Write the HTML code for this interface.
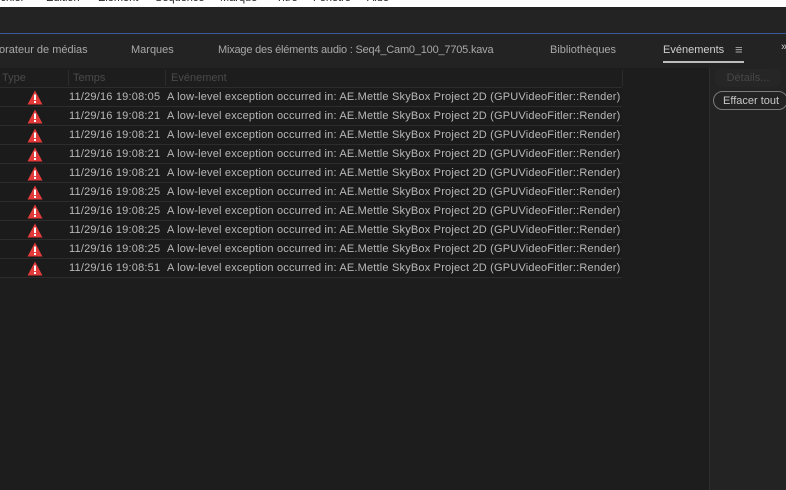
<!DOCTYPE html>
<html><head><style>
body{margin:0;width:786px;height:490px;overflow:hidden;background:#1d1d1d;font-family:"Liberation Sans",sans-serif;position:relative}
.abs{position:absolute}
.menu{left:0;top:0;width:786px;height:7px;background:#fff;overflow:hidden}
.menu span{position:absolute;top:-8px;font-size:11px;color:#222}
.bar{left:0;top:7px;width:786px;height:26px;background:#232323}
.blue{left:0;top:33px;width:786px;height:1px;background:#3a5a9a}
.tabs{left:0;top:34px;width:786px;height:34px;background:#232323}
.tab{position:absolute;top:44px;font-size:11px;color:#a8a8a8;white-space:nowrap}
.hdr{position:absolute;top:72px;font-size:11px;color:#4a4a4a}
.row{position:absolute;left:0;width:622px;height:18px;border-bottom:1px solid #2c2c2c;background:#1b1b1b;font-size:11px;color:#b8b8b8;line-height:19px;white-space:nowrap}
.row .t{position:absolute;left:69px;letter-spacing:0.2px}
.row .e{position:absolute;left:167px;letter-spacing:0.19px}
.row svg{position:absolute;left:27px;top:2px}
.right{left:709px;top:68px;width:77px;height:422px;background:#232323;border-left:1px solid #2e2e2e}
</style></head><body>
<div class="abs menu"><span style="left:-2px">ichier</span><span style="left:46px">Edition</span><span style="left:98px">Elément</span><span style="left:155px">Séquence</span><span style="left:220px">Marque</span><span style="left:276px">Titre</span><span style="left:313px">Fenêtre</span><span style="left:367px">Aide</span></div>
<div class="abs bar"></div>
<div class="abs blue"></div>
<div class="abs tabs"></div>
<div class="tab" style="left:-1px">orateur de médias</div>
<div class="tab" style="left:131px">Marques</div>
<div class="tab" style="left:218px;letter-spacing:-0.2px">Mixage des éléments audio : Seq4_Cam0_100_7705.kava</div>
<div class="tab" style="left:550px">Bibliothèques</div>
<div class="tab" style="left:663px;color:#d0d0d0">Evénements</div>
<div class="abs" style="left:663px;top:61px;width:81px;height:2px;background:#bdbdbd"></div>
<div class="tab" style="left:735px;top:42px;font-size:13px">≡</div>
<div class="tab" style="left:781px;top:41px;color:#ccc">»</div>
<div class="abs" style="left:0;top:68px;width:709px;height:422px;background:#1d1d1d"></div>
<div class="hdr" style="left:2px">Type</div>
<div class="abs" style="left:68px;top:70px;width:1px;height:16px;background:#2c2c2c"></div>
<div class="hdr" style="left:73px">Temps</div>
<div class="abs" style="left:165px;top:70px;width:1px;height:16px;background:#2c2c2c"></div>
<div class="hdr" style="left:171px">Evénement</div>
<div class="abs" style="left:622px;top:70px;width:1px;height:16px;background:#2c2c2c"></div>
<div class="abs" style="left:0;top:87px;width:622px;height:1px;background:#2c2c2c"></div>
<div class="abs right"></div>
<div class="abs" style="left:714px;top:69px;width:68px;height:18px;border-radius:9px;background:#262626;color:#474747;font-size:11px;line-height:18px;text-align:center">Détails...</div>
<div class="abs" style="left:713px;top:91px;width:75px;height:19px;border-radius:10px;border:1px solid #7a7a7a;color:#c8c8c8;font-size:11px;line-height:19px;padding-left:9px;box-sizing:border-box;white-space:nowrap">Effacer tout</div>
<div id="rows"></div>
<script>
var t=["05","21","21","21","21","25","25","25","25","51"],h="";
for(var i=0;i<10;i++){h+='<div class="row" style="top:'+(88+i*19)+'px"><svg width="16" height="15" viewBox="0 0 16 15"><path d="M8 0.5L15.5 14.5H0.5Z" fill="#e03a3a"/><rect x="7" y="4.5" width="2" height="5.5" fill="#fff"/><rect x="7" y="11" width="2" height="2" fill="#fff"/></svg><span class="t">11/29/16 19:08:'+t[i]+'</span><span class="e">A low-level exception occurred in: AE.Mettle SkyBox Project 2D (GPUVideoFitler::Render)</span></div>';}
document.getElementById("rows").innerHTML=h;
</script>
</body></html>
